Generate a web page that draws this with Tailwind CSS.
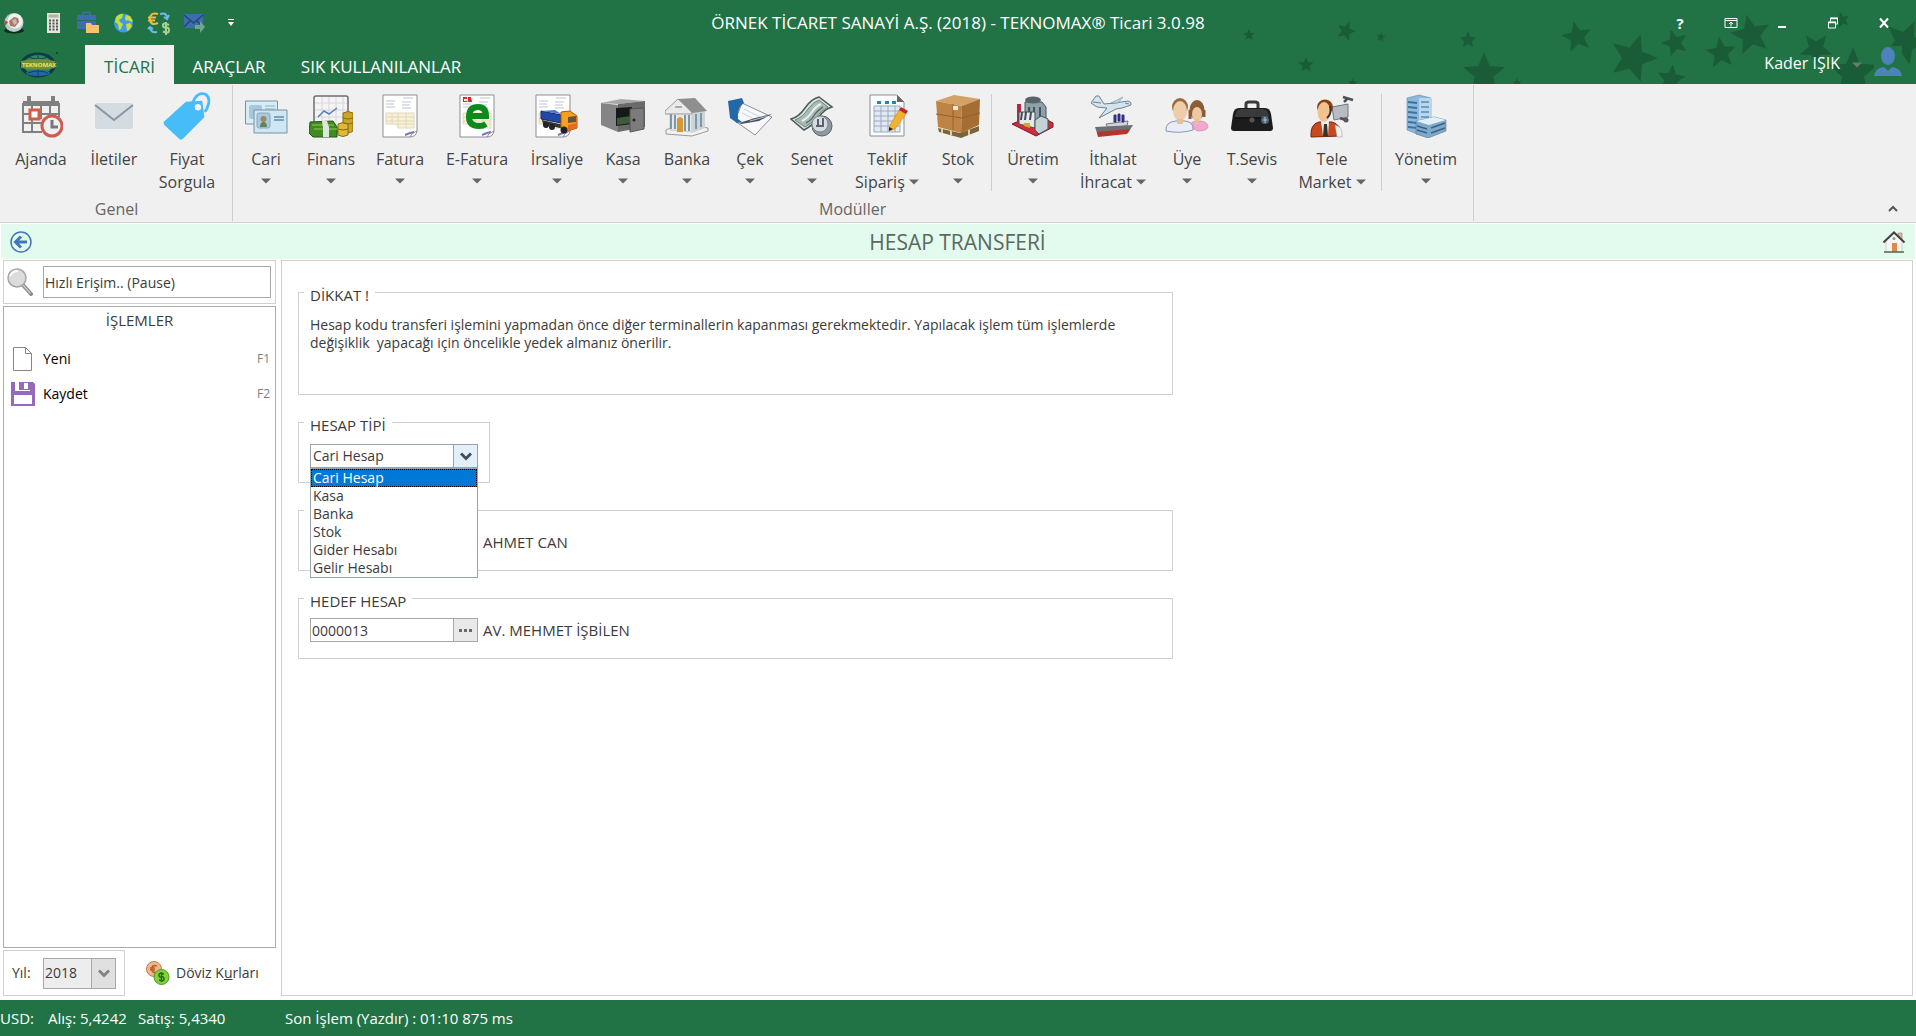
<!DOCTYPE html>
<html lang="tr">
<head>
  <meta charset="UTF-8" />
  <meta name="viewport" content="width=device-width, initial-scale=1.0" />
  <title>TEKNOMAX Ticari - Hesap Transferi</title>
  <script src="https://cdn.jsdelivr.net/npm/@tailwindcss/browser@4"></script>
</head>
<body class="min-h-screen flex flex-col bg-white font-['Open_Sans','Noto_Sans',sans-serif] text-[15px] leading-[18px] text-[#3b3b3b]">

  <!-- shared shapes -->
  <svg class="hidden">
    <symbol id="down" viewBox="0 0 10 6"><path d="M0 0.5h10L5 5.5z" fill="#666" /></symbol>
    <symbol id="sheet" viewBox="0 0 44 44">
      <path d="M5 1h34v36q-1 6-7 6H5z" fill="#fff" stroke="#8d8d92" />
      <path d="M8 7h9M8 10h8M8 13h9M24 8h9M24 11h8M24 14h9M25 4h10" stroke="#d3d7e2" stroke-width="1.500" />
      <path d="M8 19h28v15H20l-4-4H8z" fill="#f8f1d4" />
      <path d="M8 19h28M8 23h28M8 27h28M8 30h28M20 34h16M8 19v11M14 19v11M20 19v15M28 19v15M36 19v15" stroke="#e0d8c0" fill="none" />
      <path d="M27 41l5-2 4-1" stroke="#7777c8" stroke-width="2" fill="none" />
      <path d="M32 43q1-4 7-6" fill="none" stroke="#8d8d92" />
    </symbol>
  </svg>

  <header class="relative bg-[#217346] text-white overflow-hidden">
    <svg class="absolute right-0 top-0 w-[716px] h-[84px]" viewBox="0 0 716 84" fill="#1b5c38">
      <defs><path id="star" d="M0-10L2.600-3.600 9.500-3.100 4.200 1.400 5.900 8.100 0 4.500-5.900 8.100-4.200 1.400-9.500-3.100-2.600-3.600z" /></defs>
      <use href="#star" transform="translate(49 35) scale(.6)" />
      <use href="#star" transform="translate(146 31) rotate(20) scale(1)" />
      <use href="#star" transform="translate(181 37) rotate(10) scale(.5)" />
      <use href="#star" transform="translate(106 65) scale(.8)" />
      <use href="#star" transform="translate(268 40) scale(.9)" />
      <use href="#star" transform="translate(284 74) scale(2.2)" />
      <use href="#star" transform="translate(153 83) scale(.5)" />
      <use href="#star" transform="translate(317 83) scale(.5)" />
      <use href="#star" transform="translate(377 37) rotate(-12) scale(1.6)" />
      <use href="#star" transform="translate(433 58) rotate(18) scale(2.5)" />
      <use href="#star" transform="translate(475 43) rotate(-18) scale(1.4)" />
      <use href="#star" transform="translate(471 79) rotate(8) scale(1.5)" />
      <use href="#star" transform="translate(521 53) rotate(-6) scale(1.6)" />
      <use href="#star" transform="translate(551 35) rotate(-12) scale(2.1)" />
      <use href="#star" transform="translate(616 49) rotate(36) scale(1.7)" />
      <use href="#star" transform="translate(642 20) rotate(-15) scale(.8)" />
      <use href="#star" transform="translate(653 73) scale(2.6)" />
      <use href="#star" transform="translate(705 42) rotate(25) scale(2.3)" />
    </svg>

    <div class="relative h-[45px] grid grid-cols-[1fr_auto_1fr] items-center">
      <div class="flex items-center gap-3 pl-[3px]">
        <button aria-label="Uygulama" class="w-6"><svg class="size-[22px]" viewBox="0 0 22 22"><ellipse cx="11" cy="18.500" rx="10" ry="3" fill="#0b2e1a" /><circle cx="11" cy="10.500" r="9.500" fill="#b9cdc8" /><circle cx="12" cy="9" r="7.500" fill="#eef3f2" /><path d="M6 9l5-4 4 1 1 4-4 5-5-1z" fill="#a9796c" /><path d="M9 8l4-1 1 4-3 2z" fill="#d9b4a6" /><path d="M1 8l4 2-3 4z" fill="#d04040" /></svg></button>
        <button aria-label="Hesap makinesi" class="w-6"><svg class="size-[22px] ml-1" viewBox="0 0 22 22"><path d="M4 1h13v20H4z" fill="#e4e4e0" /><path d="M5.500 2.500h10v3h-10z" fill="#a9b8a0" /><path d="M6 8.500h9M6 11.500h9M6 14.500h9M6 17.500h9" stroke="#555" stroke-width="2" stroke-dasharray="2 1.500" /></svg></button>
        <button aria-label="Çanta" class="w-6"><svg class="size-[23px] ml-px" viewBox="0 0 23 23"><path d="M7 4V1.500h7V4" fill="none" stroke="#3e6cae" stroke-width="1.500" /><path d="M1 4h19v5H1zM1 10h19v8H1z" fill="#3e6cae" /><path d="M10 12h5l1 2h7v8H10z" fill="#f3c46b" /></svg></button>
        <button aria-label="Web" class="w-6"><svg class="size-[22px] ml-0.5" viewBox="0 0 22 22"><circle cx="10.500" cy="11" r="9.500" fill="#3f9be6" /><path d="M3 5q4-4 7-3l-1 4-3 2 1 2 3 2-2 5-2 1-1-6-3-2zM13 3l4 1 3 5-2 1-3-2-2 1-1-3zM13 12l4-1 2 3-3 4-2 1z" fill="#c5dd37" /></svg></button>
        <button aria-label="Döviz" class="w-6"><svg class="size-6 overflow-visible" viewBox="0 0 24 24"><path d="M11 3q-8-2-8 5t8 4M1 6.500h8M1 9.500h7" fill="none" stroke="#f4b942" stroke-width="2" /><path d="M22 14q-6-3-6 0t3 2.500 3 3-6 1M19 11v13" fill="none" stroke="#a9d292" stroke-width="2" /><path d="M13 3q6-2 7 3M17 6l3 2 2-4M10 21q-6 1-7-4M1 18l2-2 3 2" fill="none" stroke="#6db9ea" stroke-width="2" /></svg></button>
        <button aria-label="Posta" class="w-6"><svg class="size-6" viewBox="0 0 24 24"><path d="M1 3h19v14H1z" fill="#3e6cae" /><path d="M1 4l9.500 8L20 4M1 16l6-6M20 16l-6-6" fill="none" stroke="#1d4a72" stroke-width="1.500" /><path d="M12 14h5v-4l5 6-5 6v-4h-5z" fill="#6fa58a" /></svg></button>
        <button aria-label="Özelleştir" class="w-6"><svg class="w-2 h-2 ml-2" viewBox="0 0 8 8"><path d="M1 .5h6" stroke="#fff" /><path d="M1 3h6L4 7z" fill="#fff" /></svg></button>
      </div>
      <h1 class="text-[17px]">ÖRNEK TİCARET SANAYİ A.Ş. (2018) - TEKNOMAX® Ticari 3.0.98</h1>
      <div class="flex items-center justify-end gap-[31px] pr-[22px]">
        <button aria-label="Yardım" class="w-5 text-[15px] font-bold">?</button>
        <button aria-label="Şerit"><svg class="w-5 h-3" viewBox="0 0 20 12" fill="none" stroke="#fff"><path d="M4 1.500h12v9H4zM4 3.500h12M10 9.500V5M8 7l2-2 2 2" /></svg></button>
        <button aria-label="Simge durumuna küçült"><svg class="w-5 h-3" viewBox="0 0 20 12"><path d="M6 9h8v2H6z" fill="#fff" /></svg></button>
        <button aria-label="Geri yükle"><svg class="w-5 h-3" viewBox="0 0 20 12" fill="none" stroke="#fff"><path d="M7.500 4.500V1h7v6h-2M5.500 5h7v6h-7z" /><path d="M7 1.500h8M5 5.500h8" stroke-width="1.500" /></svg></button>
        <button aria-label="Kapat"><svg class="w-5 h-3" viewBox="0 0 20 12"><path d="M6 1.500l8 9M14 1.500l-8 9" stroke="#fff" stroke-width="2" /></svg></button>
      </div>
    </div>

    <div class="relative h-[39px] flex items-stretch text-[17px]">
      <button aria-label="Teknomax menü" class="w-[85px] pr-2 flex items-center justify-center">
        <svg class="w-10 h-7" viewBox="0 0 40 28"><ellipse cx="19" cy="14" rx="18" ry="12.500" fill="#0e3b4c" /><ellipse cx="19" cy="14" rx="14" ry="10" fill="#2f8b45" /><ellipse cx="19" cy="22" rx="12" ry="3" fill="#2766a0" /><path d="M19 2v24M9 6q10 4 20 0M9 22q10-4 20 0" stroke="#0f4660" fill="none" /><path d="M2 10q17-4 34 0v7q-17 3-34 0z" fill="#6f8f3a" /><text x="3" y="16" font-size="6" font-weight="700" fill="#f0e558">TEKNOMAX</text><circle cx="38" cy="2" r="1" fill="#0e3b1c" /></svg>
      </button>
      <nav class="flex">
        <a href="#" class="w-[89px] pt-1 flex items-center justify-center bg-[#f0f0f0] text-[#217346]">TİCARİ</a>
        <a href="#" class="w-[110px] pt-1 flex items-center justify-center">ARAÇLAR</a>
        <a href="#" class="w-[194px] pt-1 flex items-center justify-center">SIK KULLANILANLAR</a>
      </nav>
      <button class="ml-auto flex items-center gap-3 pr-[14px]">
        <span class="text-[16px] -mt-1">Kader IŞIK</span>
        <svg class="w-[10px] h-[6px] opacity-70" viewBox="0 0 10 6"><path d="M0 .5h10L5 5.500z" fill="#8a8a8a" /></svg>
        <svg class="w-7 h-[34px] -mt-1 bg-[#217346]" viewBox="0 0 28 34"><ellipse cx="14" cy="10" rx="7" ry="9" fill="#4d83bd" /><path d="M0 30q1-8 10-9l4 4 4-4q9 1 10 9z" fill="#4d83bd" /></svg>
      </button>
    </div>
  </header>

  <section aria-label="Şerit" class="relative bg-[#f0f0f0] border-b border-[#cfcfcf] flex text-[16px] leading-[23px] text-[#444] pt-px pb-px">
    <!-- Genel -->
    <div class="border-r border-[#cdcdcd] pl-[5px] w-[233px] flex flex-col">
      <div class="flex h-[113px] pt-[9px]">
        <button class="w-[72px] flex flex-col items-center gap-[10px]">
          <svg class="size-11" viewBox="0 0 44 44" fill="none"><path d="M4 7h36v5H4z" fill="#808080" /><path d="M4 9v29h19M40 9v14M13 12v25M22 12v13M31 12v9M4 20h36M4 29h20" stroke="#808080" stroke-width="2" /><path d="M10 2v6M34 2v6" stroke="#808080" stroke-width="4" /><path d="M11 16h9v9h-9z" fill="#fff" stroke="#d65a45" stroke-width="3" /><circle cx="33" cy="32" r="10" fill="#f0f0f0" stroke="#cc5d50" stroke-width="3" /><path d="M33 26v7h6" stroke="#777" stroke-width="3" /></svg>
          <span>Ajanda</span>
        </button>
        <button class="w-[74px] flex flex-col items-center gap-[10px]">
          <svg class="size-11" viewBox="0 0 44 44" fill="none"><rect x="3" y="9" width="38" height="26" rx="2" fill="#d5dce1" /><path d="M3 11l19 15 19-15" stroke="#8797a3" stroke-width="2" /></svg>
          <span>İletiler</span>
        </button>
        <button class="w-[72px] flex flex-col items-center gap-[10px]">
          <svg class="size-12 -my-0.5" viewBox="0 0 44 44" fill="none"><path d="M21 9l15-1 2 15-20 20q-2 1-3 0L1 30q-1-2 0-3z" fill="#46bcf8" /><circle cx="32" cy="14" r="3" fill="#f0f0f0" /><path d="M29 15q-4-2 0-9 4-6 10-4 5 4 2 11-1 4-3 5" stroke="#46bcf8" stroke-width="2.500" /></svg>
          <span>Fiyat<br />Sorgula</span>
        </button>
      </div>
      <div class="text-center text-[#666] pr-1">Genel</div>
    </div>

    <!-- Modüller -->
    <div class="border-r border-[#cdcdcd] w-[1241px] px-[2px] flex flex-col">
      <div class="flex h-[113px] pt-[9px]">
        <button class="w-[62px] flex flex-col items-center gap-[10px]">
          <svg class="size-11" viewBox="0 0 44 44"><path d="M1.500 7h32v23h-32z" fill="#d9ecf6" stroke="#7792a5" /><rect x="5" y="11" width="13" height="14" rx="2" fill="#a5c9da" /><path d="M21 12h10M21 15h10" stroke="#a7c3d2" stroke-width="1.500" /><path d="M10 16h33v23H10z" fill="#cfe7f4" stroke="#7792a5" /><rect x="13" y="19" width="13" height="15" rx="2" fill="#a9cbd9" stroke="#88a9b9" /><circle cx="19.500" cy="25" r="3" fill="#a28468" /><path d="M16 33q0-5 3.500-5t3.500 5z" fill="#63815b" /><path d="M30 23h10M30 26h10" stroke="#7aa3c0" stroke-width="2" /></svg>
          <span>Cari</span>
          <svg class="w-[10px] h-[6px] -mt-[3px]"><use href="#down" /></svg>
        </button>
        <button class="w-[68px] flex flex-col items-center gap-[10px]">
          <svg class="size-11" viewBox="0 0 44 44"><rect x="5" y="2" width="34" height="36" rx="2" fill="#f4f4f4" stroke="#6c6c70" stroke-width="1.500" /><path d="M6 9h32M6 16h32M6 23h32M13 3v30M20 3v30M27 3v30M34 3v30" stroke="#d6d6dc" /><path d="M9 23l6-6 5 3 8-6" fill="none" stroke="#5b7fb8" stroke-width="1.500" /><path d="M34 19q5-3 10 0v18q-5 4-10 0z" fill="#c9a52a" stroke="#8a6d10" /><path d="M29 30q5-3 10 0v11q-5 3-10 0z" fill="#dfb93a" stroke="#8a6d10" /><path d="M34 24q5 2 10 0M34 29q5 2 10 0M29 35q5 2 10 0" stroke="#8a6d10" fill="none" /><path d="M1 28l23-1 4 6v10H4l-4-4z" fill="#3f8c20" stroke="#23590f" /><path d="M5 35h23M3 31h22" stroke="#93c765" /><path d="M13 27h5l2 6v10h-6v-9z" fill="#dfe5df" /></svg>
          <span>Finans</span>
          <svg class="w-[10px] h-[6px] -mt-[3px]"><use href="#down" /></svg>
        </button>
        <button class="w-[70px] flex flex-col items-center gap-[10px]">
          <svg class="size-11"><use href="#sheet" /></svg>
          <span>Fatura</span>
          <svg class="w-[10px] h-[6px] -mt-[3px]"><use href="#down" /></svg>
        </button>
        <button class="w-[84px] flex flex-col items-center gap-[10px]">
          <svg class="size-11" viewBox="0 0 44 44"><use href="#sheet" /><path d="M8 3h4v2H9v2h3v1H8zM13 3h3l1 5h-4z" fill="#e2232b" /><path d="M15 22h16q0-9-8-9-9 0-9 10 0 9 10 9 4 0 7-2" fill="none" stroke="#0e8a1c" stroke-width="6" /></svg>
          <span>E-Fatura</span>
          <svg class="w-[10px] h-[6px] -mt-[3px]"><use href="#down" /></svg>
        </button>
        <button class="w-[76px] flex flex-col items-center gap-[10px]">
          <svg class="size-11 overflow-visible" viewBox="0 0 44 44"><g transform="translate(-4 0)"><use href="#sheet" width="44" height="44" /></g><path d="M6 17l20 4v8l-20-4z" fill="#2448a8" stroke="#14296a" /><path d="M6 17l14-1 6 4z" fill="#4b76d8" /><path d="M7 26l22 5v4L8 30z" fill="#333" /><path d="M26 18l9-1 7 5v12l-9 3-7-3z" fill="#f5a21f" stroke="#a35b0a" /><path d="M33 23l8-1v6l-8 1z" fill="#6e4f3f" /><path d="M33 31l9-2v5l-9 3z" fill="#e66a22" /><circle cx="11" cy="31" r="3" fill="#222" /><circle cx="17" cy="33" r="3" fill="#222" /><circle cx="29" cy="36" r="3.500" fill="#222" /></svg>
          <span>İrsaliye</span>
          <svg class="w-[10px] h-[6px] -mt-[3px]"><use href="#down" /></svg>
        </button>
        <button class="w-[56px] flex flex-col items-center gap-[10px]">
          <svg class="size-11" viewBox="0 0 44 44"><path d="M0 9l20-4 24 2-27 3z" fill="#a8a8a8" /><path d="M0 9l17 2v27L0 31z" fill="#858585" /><path d="M17 10l27-3v26l-27 5z" fill="#6a6a6a" /><path d="M15 14l16-1v17l-16 2z" fill="#16191a" /><path d="M16 24l14-2v7l-14 2z" fill="#3d5c3a" /><path d="M29 15l14-1v21l-14 3z" fill="#7c7c7c" stroke="#555" /><circle cx="33" cy="26" r="1.500" fill="#222" /></svg>
          <span>Kasa</span>
          <svg class="w-[10px] h-[6px] -mt-[3px]"><use href="#down" /></svg>
        </button>
        <button class="w-[72px] flex flex-col items-center gap-[10px]">
          <svg class="size-11" viewBox="0 0 44 44"><path d="M1 36l6-3h30l6 1v3l-16 5L1 40z" fill="#f2f2f2" stroke="#999" /><path d="M5 18h22v20L5 36z" fill="#e4e8ea" stroke="#aaa" stroke-width=".5" /><path d="M27 18l13-1v17l-13 5z" fill="#cdd3d6" /><path d="M0 17L13 5l14 12v3H0z" fill="#e9e9e9" stroke="#999" /><path d="M13 5l17-1 12 13-15 2z" fill="#8f8f8f" /><path d="M6 20v15M10 21v14M20 21v16M24 21v16M31 20v15M36 19v14" stroke="#7e98ab" stroke-width="2" /><path d="M12 38V25q3-4 6 0v13z" fill="#d59a2b" /><path d="M10 12h7v2h-7z" fill="#aaa" /></svg>
          <span>Banka</span>
          <svg class="w-[10px] h-[6px] -mt-[3px]"><use href="#down" /></svg>
        </button>
        <button class="w-[54px] flex flex-col items-center gap-[10px]">
          <svg class="size-11 overflow-visible" viewBox="0 0 44 44"><path d="M14 9l30 14-17 18L7 27z" fill="#f7f8fb" stroke="#8b8e96" /><path d="M0 7l14-3 2 5q-7 4-6 16l4 3-5 1L2 24z" fill="#2568a8" /><path d="M16 15l18 9M14 19l14 7" stroke="#ccd2da" /><path d="M11 29l16-5 17-4-13 7-18 3z" fill="#4c5360" /><path d="M22 27l18-5" stroke="#b5bdc9" /></svg>
          <span>Çek</span>
          <svg class="w-[10px] h-[6px] -mt-[3px]"><use href="#down" /></svg>
        </button>
        <button class="w-[70px] flex flex-col items-center gap-[10px]">
          <svg class="size-11" viewBox="0 0 44 44"><path d="M1 25q8-2 14-11Q21 5 29 3l13 10q-8 2-14 11-6 8-14 12z" fill="#dbe4e1" stroke="#4c5b58" stroke-width="1.500" /><path d="M5 26q8-3 13-11 5-7 11-9l9 7q-7 3-12 11-5 6-11 9z" fill="#a9bbb6" stroke="#71837f" /><path d="M12 27q6-3 10-9 4-6 9-8" fill="none" stroke="#e9efed" stroke-width="2" /><path d="M16 29q6-3 9-9 4-5 8-7" fill="none" stroke="#5f716d" stroke-width="1.500" /><circle cx="32" cy="32" r="10" fill="#8f9aa2" stroke="#56616a" /><circle cx="30" cy="30" r="8" fill="#d5dbe0" stroke="#7a858d" /><path d="M28 25v7M33 24v7M26 32h8" stroke="#59636b" stroke-width="2" /></svg>
          <span>Senet</span>
          <svg class="w-[10px] h-[6px] -mt-[3px]"><use href="#down" /></svg>
        </button>
        <button class="w-[80px] flex flex-col items-center gap-[10px]">
          <svg class="size-11" viewBox="0 0 44 44"><path d="M5 1h27l7 7v34H5z" fill="#fafbfd" stroke="#8d8d92" /><path d="M32 1v7h7z" fill="#666" /><path d="M9 12h26v26H9z" fill="#e2e9f3" /><path d="M9 12h26M9 17h26M9 22h26M9 27h26M9 32h26M9 38h26M9 12v26M16 12v26M23 12v26M30 12v26M35 12v26" stroke="#9aa9c0" fill="none" /><path d="M12 7h4v3h-4zM20 7h4v3h-4zM27 7h4v3h-4z" fill="#2a83ad" /><path d="M34 16l7 4-11 15-6 2 1-6z" fill="#f2b32c" stroke="#c37d15" stroke-width=".5" /><path d="M34 16l7 4 2-3-7-4z" fill="#c3282f" /><path d="M24 37v-4l4 2z" fill="#222" /></svg>
          <span>Teklif<br />Sipariş <svg class="inline w-[10px] h-[6px] mb-[3px]"><use href="#down" /></svg></span>
        </button>
        <button class="w-[62px] flex flex-col items-center gap-[10px]">
          <svg class="size-11" viewBox="0 0 44 44"><path d="M2 34l22 5 19-7v5l-18 7-22-6z" fill="#7a6536" /><path d="M0 7l18-6 26 4-18 7z" fill="#d3a265" /><path d="M0 7l26 5-1 27L2 33z" fill="#bd8446" /><path d="M26 12l18-7-1 26-18 8z" fill="#a56c33" /><path d="M0 20l26 4 18-5M17 10v26" stroke="#94602b" fill="none" /><path d="M17 12h5v4h-5z" fill="#efe6d6" /><path d="M6 35v4M15 37v4M33 36v5" stroke="#e1cf9e" stroke-width="2" /></svg>
          <span>Stok</span>
          <svg class="w-[10px] h-[6px] -mt-[3px]"><use href="#down" /></svg>
        </button>
        <div class="w-[6px] h-[97px] border-l border-[#cdcdcd] ml-[2px] -mr-[2px]"></div>
        <button class="w-[76px] flex flex-col items-center gap-[10px]">
          <svg class="size-11" viewBox="0 0 44 44"><path d="M1 30l24 12 17-9v-4L25 20z" fill="#cc2f3c" stroke="#7c1620" /><path d="M6 10h4v20H6z" fill="#b5283a" /><path d="M14 8h17l4 5v18H14z" fill="#8fa1a8" stroke="#46555c" /><ellipse cx="22" cy="6" rx="8" ry="3.500" fill="#5a6468" /><path d="M18 13v16M23 13v16M29 13v14" stroke="#43545b" stroke-width="2" /><path d="M8 18h16v16l-16-4z" fill="#e5e9ea" stroke="#46555c" /><path d="M11 18l-1 8M15 18l-1 8M20 18l-1 8" stroke="#3e4d54" stroke-width="2" /><path d="M24 26l6-4 7 3v10l-9 5-4-4z" fill="#c2d2d8" stroke="#46555c" /><path d="M13 29h6v5l-6-2z" fill="#d6a823" /></svg>
          <span>Üretim</span>
          <svg class="w-[10px] h-[6px] -mt-[3px]"><use href="#down" /></svg>
        </button>
        <button class="w-[84px] flex flex-col items-center gap-[10px]">
          <svg class="size-11 overflow-visible" viewBox="0 0 44 44"><path d="M5 2h3l5 8 11-1 13-2q4 1 3 4l-9 3-6 1-17 9 8-10-10-1-6-4z" fill="#d5e3ee" stroke="#6b8395" /><path d="M20 9l12-6-5 6z" fill="#c2d3e0" stroke="#6b8395" stroke-width=".5" /><path d="M2 8l8 1M34 9l4 1" stroke="#6b8395" /><path d="M15 30l22-3-1 5-19 2z" fill="#d3d3dc" stroke="#777" /><path d="M23 21h2v7h-2zM27 20h2v7h-2zM31 21h2v7h-2z" fill="#32307f" stroke="#32307f" /><path d="M4 33l38-2-5 8-30 3z" fill="#6d6f75" /><path d="M6 38l33-3-3 5-29 3z" fill="#b8332c" /></svg>
          <span>İthalat<br />İhracat <svg class="inline w-[10px] h-[6px] mb-[3px]"><use href="#down" /></svg></span>
        </button>
        <button class="w-[64px] flex flex-col items-center gap-[10px]">
          <svg class="size-11" viewBox="0 0 44 44"><path d="M26 34q-2-7 6-7h4q7 1 7 6-1 4-10 4z" fill="#f2a8ce" stroke="#b97798" stroke-width=".5" /><ellipse cx="32" cy="16" rx="7.500" ry="10" fill="#8c5c35" /><path d="M25 16v9M39 16v7" stroke="#8c5c35" stroke-width="3" /><ellipse cx="32" cy="20" rx="5" ry="7" fill="#edc9a3" /><path d="M30 25h4v5h-4z" fill="#e6bd95" /><path d="M1 37q-1-9 10-10h9q9 1 8 9-13 4-27 1z" fill="#e9edf7" stroke="#8795b8" /><ellipse cx="15" cy="13" rx="8" ry="9" fill="#9a6a3e" /><ellipse cx="15" cy="17" rx="7" ry="10" fill="#efcda8" /><path d="M12 25h6v5h-6z" fill="#e6c09a" /></svg>
          <span>Üye</span>
          <svg class="w-[10px] h-[6px] -mt-[3px]"><use href="#down" /></svg>
        </button>
        <button class="w-[66px] flex flex-col items-center gap-[10px]">
          <svg class="size-11" viewBox="0 0 44 44"><path d="M16 18v-8q0-2 3-2h6q3 0 3 2v8" fill="none" stroke="#3a3a3a" stroke-width="3" /><path d="M9 14h26q5 0 6 6l2 14q0 3-3 3H4q-3 0-3-3l2-14q1-6 6-6z" fill="#1c1c1c" /><path d="M10 15h24q4 1 5 8H5q1-7 5-8z" fill="#3a3a3a" /><path d="M4 24h36" stroke="#0b0b0b" /><circle cx="22" cy="26" r="2.500" fill="#555" /><circle cx="35" cy="26" r="4" fill="#51616e" /><path d="M35 23v6M33 26h4" stroke="#b6c5d0" /></svg>
          <span>T.Sevis</span>
          <svg class="w-[10px] h-[6px] -mt-[3px]"><use href="#down" /></svg>
        </button>
        <button class="w-[94px] flex flex-col items-center gap-[10px]">
          <svg class="size-11 overflow-visible" viewBox="0 0 44 44"><path d="M22 13l16-3v13l-14 3z" fill="#b7bcc2" stroke="#72777d" /><path d="M33 3l10 3M34 8l4-4M30 24l8 3" stroke="#4c5157" stroke-width="2.500" /><circle cx="36" cy="26" r="2.500" fill="#555a60" /><path d="M1 43q-1-13 8-15h13q9 2 9 14z" fill="#c94a1e" stroke="#6f2509" /><path d="M11 27h8l-1 15h-5z" fill="#eee" /><path d="M14 30h3l1 12h-5z" fill="#333" /><path d="M25 31q8 1 7 12h-5z" fill="#f0f0f0" stroke="#999" stroke-width=".5" /><ellipse cx="15" cy="13" rx="8" ry="7.500" fill="#8d4119" /><ellipse cx="14" cy="18" rx="6.500" ry="10" fill="#f1c391" /><path d="M20 12q2 8-3 12" fill="none" stroke="#333" stroke-width="2" /></svg>
          <span>Tele<br />Market <svg class="inline w-[10px] h-[6px] mb-[3px]"><use href="#down" /></svg></span>
        </button>
        <div class="w-[5px] h-[97px] border-l border-[#cdcdcd] ml-[2px] -mr-[2px]"></div>
        <button class="w-[84px] flex flex-col items-center gap-[10px]">
          <svg class="size-11" viewBox="0 0 44 44"><path d="M3 4l12-3 12 3v32l-14 4L3 36z" fill="#8bb8dc" stroke="#4f7da3" stroke-width=".5" /><path d="M15 4l12 0v32l-12 3z" fill="#b9d6ea" /><path d="M4 8l9 1M4 13l9 1M4 18l9 1M4 23l9 1M4 28l9 1M4 33l9 1" stroke="#3e719b" stroke-width="2" /><path d="M17 8h8M17 13h8M17 18h8M17 23h8" stroke="#6e9fc5" stroke-width="2" /><path d="M12 27l18-4 12 3v11l-18 7-12-4z" fill="#7ea9ca" stroke="#40698c" stroke-width=".5" /><path d="M12 27l18-4 12 3-17 5z" fill="#e3eff7" /><path d="M13 32l10 3M13 36l10 3M27 34l14-5M27 39l14-5" stroke="#38648a" stroke-width="1.500" /></svg>
          <span>Yönetim</span>
          <svg class="w-[10px] h-[6px] -mt-[3px]"><use href="#down" /></svg>
        </button>
      </div>
      <div class="pl-[584px] text-[#666]">Modüller</div>
    </div>
    <button aria-label="Şeridi daralt" class="absolute right-[18px] bottom-[10px]"><svg class="w-[10px] h-[7px]" viewBox="0 0 10 7"><path d="M1 6l4-4 4 4" fill="none" stroke="#555" stroke-width="2" /></svg></button>
  </section>

  <div class="mt-px mx-px h-[35px] bg-[#e2fbee] flex items-center justify-between pl-[9px] pr-[10px]">
    <button aria-label="Geri"><svg class="size-[22px]" viewBox="0 0 22 22" fill="none" stroke="#4179b6"><circle cx="11" cy="11" r="10" stroke-width="1.500" /><path d="M17 11H6M11 5.500L5.500 11l5.500 5.500" stroke-width="3" /></svg></button>
    <h2 class="text-[21px] text-[#5c685f]">HESAP TRANSFERİ</h2>
    <button aria-label="Ana sayfa"><svg class="size-[22px]" viewBox="0 0 22 22"><path d="M15 2h4v7h-4z" fill="#e0b8a8" stroke="#8a6a5c" stroke-width=".5" /><path d="M3 10l8-8 8 8v11H3z" fill="#f7f5f3" stroke="#aaa" stroke-width=".5" /><path d="M.5 11.500L11 1.500l10.500 10" fill="none" stroke="#444" stroke-width="2" /><path d="M9 12h5v9H9z" fill="#d98b4d" /><circle cx="11" cy="7.500" r="1.500" fill="#999" /><path d="M1 21h20" stroke="#556b45" stroke-width="1.500" /></svg></button>
  </div>

  <main class="grow flex gap-[5px] pt-px px-[3px] pb-1">
    <aside class="w-[273px] flex flex-col gap-[2px]">
      <div class="border border-[#d0d0d0] h-11 flex items-center pl-[3px] pr-1">
        <label for="quick" aria-label="Hızlı Erişim" class="w-9"><svg class="w-[26px] h-7" viewBox="0 0 26 28"><path d="M16 17l8 9" stroke="#8a8a8a" stroke-width="4" stroke-linecap="round" /><path d="M16 17l7.500 8.500" stroke="#c9c9c9" stroke-width="1.500" /><circle cx="10" cy="10" r="9" fill="#dcdcdc" stroke="#a6a6a6" stroke-width="1.500" /><path d="M3 8q2-5 8-5" fill="none" stroke="#fff" stroke-width="2" /></svg></label>
        <input id="quick" type="text" value="Hızlı Erişim.. (Pause)" class="min-w-0 grow h-8 border border-[#a8a8a8] px-px text-[14px] outline-none" />
      </div>
      <div class="grow border border-[#ababab] pt-1">
        <h3 class="text-center">İŞLEMLER</h3>
        <div class="mt-3">
          <button class="w-full h-[35px] flex items-center pl-[7px] pr-[5px] text-black">
            <svg class="w-6 h-6" viewBox="0 0 24 24"><path d="M2.500 .5h12l6 6v17h-18zM14.500 .5v6h6" fill="#fff" stroke="#868686" /></svg>
            <span class="ml-2 text-[14px]">Yeni</span><span class="ml-auto text-[12px] text-[#808080]">F1</span>
          </button>
          <button class="w-full h-[35px] flex items-center pl-[7px] pr-[5px] text-black">
            <svg class="w-6 h-6" viewBox="0 0 24 24"><path d="M1 0h21l2 2v22H0V0z" fill="#9569bb" /><path d="M4 0h15v9H4z" fill="#fff" /><path d="M8 0h11v8H8z" fill="#9569bb" /><path d="M13 1h4v6h-4z" fill="#fff" /><path d="M3 13h18v9H3z" fill="#fff" /></svg>
            <span class="ml-2 text-[14px]">Kaydet</span><span class="ml-auto text-[12px] text-[#808080]">F2</span>
          </button>
        </div>
      </div>
      <div class="flex h-[46px]">
        <div class="w-[122px] border border-[#d0d0d0] flex items-center pl-2 text-[14px]">
          <label for="year" class="w-[31px]">Yıl:</label>
          <div class="relative w-[73px] h-[31px]">
            <select id="year" class="appearance-none w-full h-full border border-[#a8a8a8] bg-[#ededed] pl-px text-[14px] outline-none"><option>2018</option></select>
            <span class="pointer-events-none absolute right-px top-px bottom-px w-6 border-l border-[#a8a8a8] bg-[#e0e0e0] flex items-center justify-center"><svg class="w-3 h-[9px]" viewBox="0 0 12 9"><path d="M1 1.500l5 5 5-5" fill="none" stroke="#848484" stroke-width="3" /></svg></span>
          </div>
        </div>
        <button class="ml-[21px] flex items-center gap-[6px] text-[14px]">
          <svg class="size-6" viewBox="0 0 24 24" fill="none"><circle cx="8" cy="8" r="7.500" fill="#f0b88c" stroke="#c67b48" /><path d="M11 5q-5-2-5 3t5 3M4 7h5M4 9h5" stroke="#b65e22" stroke-width="1.500" /><circle cx="15.500" cy="16" r="7.500" fill="#85d03c" stroke="#4e9a1a" /><path d="M18 13q-5-2-5 1t2.500 2 2.500 2-5 1M15.500 11v10" stroke="#1f6f12" stroke-width="1.500" /></svg>
          <span>Döviz K<u>u</u>rları</span>
        </button>
      </div>
    </aside>

    <form class="grow border border-[#d0d0d0] pl-4 pt-[25px]">
      <fieldset class="max-w-[875px] h-[109px] border border-[#cfd0d1] pl-[11px] pr-4">
        <legend class="-ml-[6px] px-[6px] h-3 leading-[18px]">DİKKAT !</legend>
        <p class="pt-[18px] text-[14px]">Hesap kodu transferi işlemini yapmadan önce diğer terminallerin kapanması gerekmektedir. Yapılacak işlem tüm işlemlerde<br />değişiklik&nbsp; yapacağı için öncelikle yedek almanız önerilir.</p>
      </fieldset>

      <fieldset class="mt-[21px] w-[192px] h-[67px] border border-[#cfd0d1] pl-[11px] pr-[11px]">
        <legend class="-ml-[6px] px-[6px] h-3 leading-[18px]">HESAP TİPİ</legend>
        <div class="relative mt-4 h-6">
          <select aria-label="Hesap tipi" class="appearance-none w-[168px] h-6 border border-[#9aa3ab] bg-white pl-[2px] text-[14px] outline-none">
            <option>Cari Hesap</option><option>Kasa</option><option>Banka</option><option>Stok</option><option>Gider Hesabı</option><option>Gelir Hesabı</option>
          </select>
          <span class="pointer-events-none absolute left-[143px] top-px w-6 h-[22px] border-l border-[#9aa3ab] bg-[#e3effb] flex items-center justify-center"><svg class="w-3 h-[9px]" viewBox="0 0 12 9"><path d="M1 1.500l5 5 5-5" fill="none" stroke="#444c58" stroke-width="3" /></svg></span>
          <ul role="listbox" aria-label="Hesap tipi" class="absolute left-0 top-6 z-10 w-[168px] border border-[#9aa3ab] bg-white text-[14px]">
            <li role="option" aria-selected="true" class="pl-px h-[18px] leading-4 bg-[#0078d7] text-white border border-dotted border-black">Cari Hesap</li>
            <li role="option" class="pl-[2px]">Kasa</li>
            <li role="option" class="pl-[2px]">Banka</li>
            <li role="option" class="pl-[2px]">Stok</li>
            <li role="option" class="pl-[2px]">Gider Hesabı</li>
            <li role="option" class="pl-[2px]">Gelir Hesabı</li>
          </ul>
        </div>
      </fieldset>

      <fieldset class="mt-[21px] max-w-[875px] h-[67px] border border-[#cfd0d1] pl-[11px]">
        <legend class="-ml-[6px] w-[120px] h-3"></legend>
        <div class="mt-[14px] h-6 flex items-center pl-[173px]">AHMET CAN</div>
      </fieldset>

      <fieldset class="mt-[21px] max-w-[875px] h-[67px] border border-[#cfd0d1] pl-[11px]">
        <legend class="-ml-[6px] px-[6px] h-3 leading-[18px]">HEDEF HESAP</legend>
        <div class="mt-[14px] h-6 flex items-center">
          <input aria-label="Hedef hesap" type="text" value="0000013" class="w-36 h-6 border border-[#a8a8a8] px-px text-[14px] outline-none" />
          <button type="button" aria-label="Hesap seç" class="w-6 h-6 border border-l-0 border-[#a8a8a8] bg-[#e9e9e9] flex items-center justify-center"><svg class="w-[13px] h-[3px]" viewBox="0 0 13 3"><path d="M0 0h3v3H0zM5 0h3v3H5zM10 0h3v3h-3z" fill="#6a6a6a" /></svg></button>
          <span class="ml-[5px]">AV. MEHMET İŞBİLEN</span>
        </div>
      </fieldset>
    </form>
  </main>

  <footer class="h-9 bg-[#217346] text-white flex items-center">
    <span class="w-12">USD:</span>
    <span class="w-[90px]">Alış: 5,4242</span>
    <span class="w-[147px]">Satış: 5,4340</span>
    <span>Son İşlem (Yazdır) : 01:10 875 ms</span>
  </footer>
</body>
</html>
